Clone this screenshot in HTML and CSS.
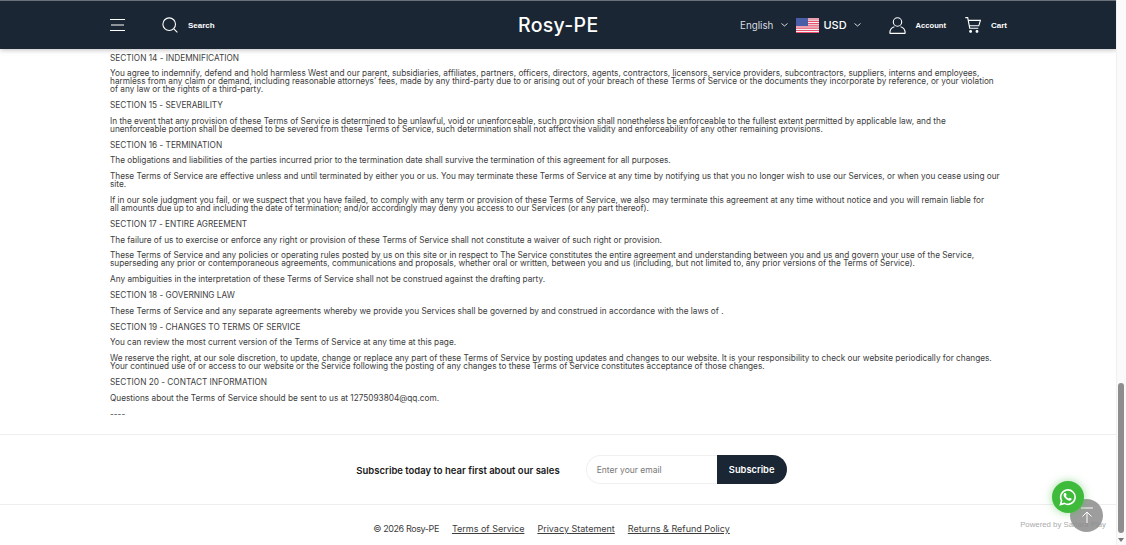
FILE: index.html
```html
<!DOCTYPE html>
<html>

<head>
	<meta charset="utf-8">
	<title>Terms of Service - Rosy-PE</title>
	<link rel="stylesheet" href="styles.css">
</head>

<body>
	<div class="page">
		<header class="topbar">
			<div class="topbar_left">
				<svg class="icon_menu" width="16" height="12" viewBox="0 0 16 12" fill="none" stroke="#fff" stroke-width="1"><path d="M0 .5h15M1 6h13M0 11.5h15"/></svg>
				<div class="search">
					<svg width="16" height="16" viewBox="0 0 16 16" fill="none" stroke="#fff" stroke-width="1.1"><circle cx="7.2" cy="7.2" r="6.3"/><path d="M11.8 11.8l3.6 3.6"/></svg>
					<span class="small_label">Search</span>
				</div>
			</div>
			<div class="logo">Rosy-PE</div>
			<div class="topbar_right">
				<span class="lang">English</span>
				<svg class="chev" width="7" height="4" viewBox="0 0 7 4" fill="none" stroke="#d5d9dd"><path d="M.5.5l3 2.5 3-2.5"/></svg>
				<svg class="flag" width="23" height="15" viewBox="0 0 23 15"><rect width="23" height="15" fill="#f3f3f5"/><path d="M0 1h23M0 3.3h23M0 5.6h23M0 7.9h23M0 10.2h23M0 12.5h23M0 14.6h23" stroke="#e8516b" stroke-width="1.2"/><rect width="12" height="8" fill="#4a5ea8"/></svg>
				<span class="currency">USD</span>
				<svg class="chev" width="7" height="4" viewBox="0 0 7 4" fill="none" stroke="#d5d9dd"><path d="M.5.5l3 2.5 3-2.5"/></svg>
				<div class="account">
					<svg width="17" height="17" viewBox="0 0 17 17" fill="none" stroke="#fff" stroke-width="1.1"><circle cx="8.5" cy="5" r="4.2"/><path d="M.8 16.4c0-3.6 2.4-6 4.6-6.6M16.2 16.4c0-3.6-2.4-6-4.6-6.6M.8 16.4h15.400"/></svg>
					<span class="small_label">Account</span>
				</div>
				<div class="cart">
					<svg width="16" height="16" viewBox="0 0 16 16" fill="none" stroke="#fff" stroke-width="1.1"><path d="M.3.6h2.4l2 10.6h8.6M3.2 3.4h12.2l-1.6 5.4H4.2"/><circle cx="5.6" cy="14.4" r=".9" fill="#fff"/><circle cx="12" cy="14.4" r=".9" fill="#fff"/></svg>
					<span class="small_label">Cart</span>
				</div>
			</div>
		</header>

		<main class="terms">
			<p>SECTION 14 - INDEMNIFICATION</p>
			<p>You agree to indemnify, defend and hold harmless West and our parent, subsidiaries, affiliates, partners, officers, directors, agents, contractors, licensors, service providers, subcontractors, suppliers, interns and employees, harmless from any claim or demand, including reasonable attorneys’ fees, made by any third-party due to or arising out of your breach of these Terms of Service or the documents they incorporate by reference, or your violation of any law or the rights of a third-party.</p>
			<p>SECTION 15 - SEVERABILITY</p>
			<p>In the event that any provision of these Terms of Service is determined to be unlawful, void or unenforceable, such provision shall nonetheless be enforceable to the fullest extent permitted by applicable law, and the<br>unenforceable portion shall be deemed to be severed from these Terms of Service, such determination shall not affect the validity and enforceability of any other remaining provisions.</p>
			<p>SECTION 16 - TERMINATION</p>
			<p>The obligations and liabilities of the parties incurred prior to the termination date shall survive the termination of this agreement for all purposes.</p>
			<p>These Terms of Service are effective unless and until terminated by either you or us. You may terminate these Terms of Service at any time by notifying us that you no longer wish to use our Services, or when you cease using our site.</p>
			<p>If in our sole judgment you fail, or we suspect that you have failed, to comply with any term or provision of these Terms of Service, we also may terminate this agreement at any time without notice and you will remain liable for<br>all amounts due up to and including the date of termination; and/or accordingly may deny you access to our Services (or any part thereof).</p>
			<p>SECTION 17 - ENTIRE AGREEMENT</p>
			<p>The failure of us to exercise or enforce any right or provision of these Terms of Service shall not constitute a waiver of such right or provision.</p>
			<p>These Terms of Service and any policies or operating rules posted by us on this site or in respect to The Service constitutes the entire agreement and understanding between you and us and govern your use of the Service, superseding any prior or contemporaneous agreements, communications and proposals, whether oral or written, between you and us (including, but not limited to, any prior versions of the Terms of Service).</p>
			<p>Any ambiguities in the interpretation of these Terms of Service shall not be construed against the drafting party.</p>
			<p>SECTION 18 - GOVERNING LAW</p>
			<p>These Terms of Service and any separate agreements whereby we provide you Services shall be governed by and construed in accordance with the laws of .</p>
			<p>SECTION 19 - CHANGES TO TERMS OF SERVICE</p>
			<p>You can review the most current version of the Terms of Service at any time at this page.</p>
			<p>We reserve the right, at our sole discretion, to update, change or replace any part of these Terms of Service by posting updates and changes to our website. It is your responsibility to check our website periodically for changes. Your continued use of or access to our website or the Service following the posting of any changes to these Terms of Service constitutes acceptance of those changes.</p>
			<p>SECTION 20 - CONTACT INFORMATION</p>
			<p>Questions about the Terms of Service should be sent to us at 1275093804@qq.com.</p>
			<p>----</p>
		</main>

		<section class="subscribe">
			<div class="subscribe_title">Subscribe today to hear first about our sales</div>
			<div class="subscribe_form">
				<div class="email">Enter your email</div>
				<div class="subscribe_btn">Subscribe</div>
			</div>
		</section>

		<footer class="footer">
			<span class="copyright">© 2026 Rosy-PE</span>
			<a>Terms of Service</a>
			<a>Privacy Statement</a>
			<a>Returns &amp; Refund Policy</a>
			<span class="powered">Powered by Sahara Play</span>
		</footer>
	</div>

	<div class="scrollbar">
		<div class="scroll_thumb"></div>
		<div class="scroll_arrow"></div>
	</div>

	<div class="top_btn">
		<svg width="16" height="17" viewBox="0 0 16 17" fill="none" stroke="#fff" stroke-width="1"><path d="M2 1h12M8 16V5M3.500 9.500L8 5l4.500 4.500"/></svg>
	</div>
	<div class="wa_btn">
		<svg width="18" height="18" viewBox="0 0 18 18"><path fill="none" stroke="#fff" stroke-width="1.6" d="M1.5 16.5l1.1-3.9A7.2 7.2 0 1 1 5.4 15.4z"/><path fill="#fff" d="M6.2 4.9c.3 0 .6 0 .8.5l.6 1.4c0 .3 0 .5-.7 1.3.6 1.100 1.500 1.900 2.700 2.500.7-.8.900-1 1.200-.9l1.500.7c.4.200.4.400.3.900-.2.900-1.200 1.500-2 1.400-2.600-.3-5.500-2.800-6-5.400-.2-1 .4-2 1-2.300z"/></svg>
	</div>
</body>

</html>
```

FILE: styles.css
```css
body {
	margin: 0;
	background: #fff;
	font-family: "Inter", "Liberation Sans", sans-serif;
	height: 545px;
	overflow: hidden;
}
.page {
	width: 1117px;
	height: 545px;
	overflow: hidden;
}
.topbar {
	height: 48px;
	background: #1a2633;
	border-top: 1px solid #6b7178;
	box-shadow: 0 1px 5px rgba(0, 0, 0, .25);
	display: flex;
	align-items: center;
	justify-content: space-between;
	padding: 0 110px;
	color: #fff;
	position: relative;
}
.topbar_left, .topbar_right, .search, .account, .cart {
	display: flex;
	align-items: center;
}
.search {
	margin-left: 36px;
	gap: 10px;
}
.small_label {
	font: bold 8px "Liberation Sans", sans-serif;
}
.account .small_label {
	font-size: 7.6px;
}
.logo {
	font: 500 19.5px "Inter", sans-serif;
	letter-spacing: .3px;
	position: absolute;
	left: 518px;
}
.lang {
	font: 9.800px "Inter", sans-serif;
	color: #d8dce0;
	margin-right: 8px;
}
.flag {
	margin-left: 8px;
	margin-right: 4px;
}
.currency {
	font: 500 11px "Inter", sans-serif;
	margin-right: 7px;
}
.account {
	margin-left: 28px;
	gap: 10px;
}
.cart {
	margin-left: 19px;
	gap: 10px;
}
.terms {
	padding: 4.5px 114px 0 110px;
	color: #3d3d3d;
	font-size: 8.25px;
	line-height: 8px;
}
.terms p {
	margin: 0 0 7.8px;
	min-height: 8px;
}
.subscribe {
	border-top: 1px solid #eee;
	height: 69px;
	display: flex;
	align-items: center;
	justify-content: center;
	gap: 26px;
	margin-top: 16.5px;
	padding-left: 26px;
}
.subscribe_title {
	font-size: 9.500px;
	font-weight: 600;
	color: #1a1a1a;
	padding-top: 1px;
}
.subscribe_form {
	display: flex;
	height: 29px;
}
.email {
	width: 120px;
	border: 1px solid #f0f0f0;
	border-right: 0;
	border-radius: 15px 0 0 15px;
	padding-left: 10px;
	font-size: 8.5px;
	color: #777;
	line-height: 28px;
}
.subscribe_btn {
	width: 70px;
	background: #1a2633;
	color: #fff;
	border-radius: 0 15px 15px 0;
	font-size: 9.300px;
	font-weight: 600;
	line-height: 30px;
	text-align: center;
}
.footer {
	border-top: 1px solid #eee;
	display: flex;
	justify-content: center;
	gap: 13px;
	padding: 18px 14px 0 0;
	font-size: 9px;
	color: #3d3d3d;
	position: relative;
}
.footer a {
	text-decoration: underline;
}
.copyright {
	letter-spacing: -.4px;
}
.powered {
	position: absolute;
	right: 11px;
	top: 15px;
	font: 7.800px "Liberation Sans", sans-serif;
	letter-spacing: normal;
	color: #aaa;
}
.scrollbar {
	position: fixed;
	top: 0;
	right: 0;
	width: 9px;
	height: 545px;
	background: #fafafa;
	border-left: 1px solid #f0f0f0;
}
.scroll_thumb {
	position: absolute;
	left: 1px;
	top: 383px;
	width: 6px;
	height: 150px;
	background: #8e8e8e;
	border-radius: 3px;
}
.scroll_arrow {
	position: absolute;
	left: 1px;
	top: 538px;
	border: 3px solid transparent;
	border-top: 4px solid #777;
}
.top_btn, .wa_btn {
	position: fixed;
	border-radius: 50%;
	display: flex;
	align-items: center;
	justify-content: center;
}
.top_btn {
	left: 1070px;
	top: 499px;
	width: 33px;
	height: 33px;
	background: rgba(140, 140, 140, .85);
}
.wa_btn {
	left: 1052px;
	top: 481px;
	width: 32px;
	height: 32px;
	background: #3fbb3c;
	box-shadow: 0 0 8px rgba(63, 187, 60, .5);
}
```
